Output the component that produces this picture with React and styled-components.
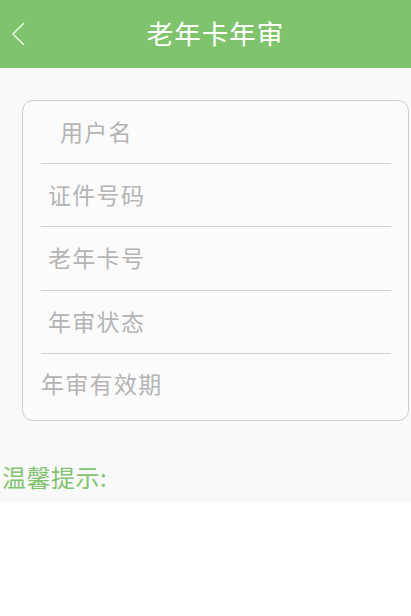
import React from "react";
import styled, { createGlobalStyle } from "styled-components";

const Global = createGlobalStyle`
  html, body { margin: 0; padding: 0; background: #ffffff; }
  body { font-family: "Noto Sans CJK SC", "Noto Sans", sans-serif; }
`;

const Page = styled.div`
  width: 411px;
  min-height: 616px;
  background: #ffffff;
`;

const Header = styled.header`
  position: relative;
  height: 68px;
  background: #7fc46d;
  display: flex;
  align-items: center;
  justify-content: center;
  padding-left: 20px;
  box-sizing: border-box;
`;

const BackButton = styled.button`
  position: absolute;
  left: 8px;
  top: 20px;
  width: 20px;
  height: 28px;
  padding: 0;
  border: 0;
  background: transparent;
  display: flex;
  align-items: center;
  justify-content: center;
`;

const Title = styled.h1`
  margin: 0 0 2px 0;
  color: #ffffff;
  font-size: 26.5px;
  font-weight: 400;
  letter-spacing: 1px;
  line-height: 1;
`;

const Body = styled.main`
  background: #f9f9f9;
  padding: 32px 2px 10px 22px;
  height: 435px;
  box-sizing: border-box;
`;

const Card = styled.section`
  width: 387px;
  height: 321px;
  box-sizing: border-box;
  border: 1px solid #cdcdcd;
  border-radius: 11px;
  background: #fbfbfb;
  display: flex;
  flex-direction: column;
  padding: 0 17px 0 18px;
`;

const Row = styled.div`
  height: ${(p) => p.$h}px;
  box-sizing: border-box;
  display: flex;
  align-items: center;
  padding-left: ${(p) => p.$indent}px;
  padding-bottom: ${(p) => (p.$last ? 8 : 3)}px;
  border-bottom: ${(p) => (p.$last ? "none" : "1px solid #cfcfcf")};
  color: #b4b4b4;
  font-size: 23px;
  font-weight: 400;
  letter-spacing: 1.3px;
`;

const Tip = styled.div`
  margin-top: 44px;
  margin-left: -20px;
  color: #82c36f;
  font-size: 24px;
  letter-spacing: 0.5px;
  line-height: 1;
`;

const rows = [
  { label: "用户名", indent: 19, h: 63 },
  { label: "证件号码", indent: 7, h: 63 },
  { label: "老年卡号", indent: 7, h: 64 },
  { label: "年审状态", indent: 7, h: 63 },
  { label: "年审有效期", indent: -1, h: 66, last: true },
];

export default function App() {
  return (
    <Page>
      <Global />
      <Header>
        <BackButton aria-label="返回">
          <svg width="14" height="24" viewBox="0 0 14 24">
            <path d="M12.5 1.5 L2 12 L12.5 22.5" fill="none" stroke="#e8f5e2" strokeWidth="1.6" strokeLinecap="round" strokeLinejoin="round" />
          </svg>
        </BackButton>
        <Title>老年卡年审</Title>
      </Header>
      <Body>
        <Card>
          {rows.map((r) => (
            <Row key={r.label} $indent={r.indent} $h={r.h} $last={r.last}>
              {r.label}
            </Row>
          ))}
        </Card>
        <Tip>温馨提示:</Tip>
      </Body>
    </Page>
  );
}
